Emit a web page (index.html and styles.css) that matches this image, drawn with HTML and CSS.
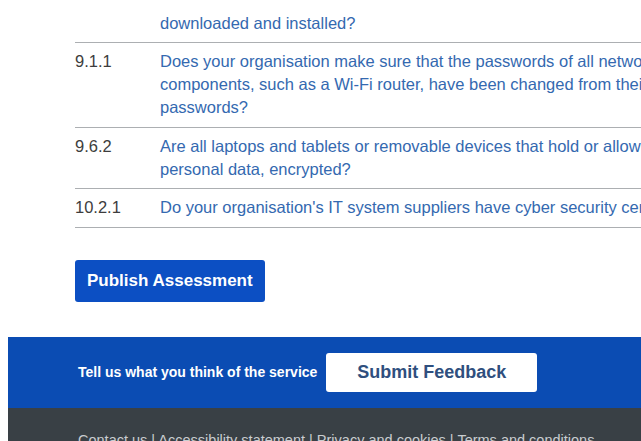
FILE: index.html
```html
<!DOCTYPE html>
<html lang="en">
<head>
<meta charset="utf-8">
<title>Assessment summary</title>
<link rel="stylesheet" href="styles.css">
</head>
<body>
<main class="content">
  <table class="questions">
    <tbody>
      <tr class="row row-continued">
        <td class="ref"></td>
        <td class="question"><a href="#" class="question-link">downloaded and installed?</a></td>
      </tr>
      <tr class="row">
        <td class="ref">9.1.1</td>
        <td class="question"><a href="#" class="question-link">Does your organisation make sure that the passwords of all networked components, such as a Wi-Fi router, have been changed from their default passwords?</a></td>
      </tr>
      <tr class="row">
        <td class="ref">9.6.2</td>
        <td class="question"><a href="#" class="question-link">Are all laptops and tablets or removable devices that hold or allow access to personal data, encrypted?</a></td>
      </tr>
      <tr class="row">
        <td class="ref">10.2.1</td>
        <td class="question"><a href="#" class="question-link">Do your organisation's IT system suppliers have cyber security certification?</a></td>
      </tr>
    </tbody>
  </table>
  <button class="btn-primary" type="button">Publish Assessment</button>
</main>
<footer class="site-footer">
  <div class="feedback">
    <span class="feedback-label">Tell us what you think of the service</span>
    <button class="btn-feedback" type="button">Submit Feedback</button>
  </div>
  <div class="footer-links">
    <a href="#">Contact us</a> | <a href="#">Accessibility statement</a> | <a href="#">Privacy and cookies</a> | <a href="#">Terms and conditions</a>
  </div>
</footer>
</body>
</html>
```

FILE: styles.css
```css
html {
  overflow: hidden;
}

body {
  margin: 8px;
  width: 1000px;
  font-family: "Liberation Sans", Arial, sans-serif;
  background: #ffffff;
  color: #3a3a3a;
}

.content {
  padding: 4px 0 0 67px;
}

/* Question table */
.questions {
  border-collapse: collapse;
  font-size: 16.5px;
  line-height: 23px;
}

.row {
  border-bottom: 1px solid #acafb2;
}

.row td {
  padding: 7px 0 7.5px;
  vertical-align: top;
}

.row-continued td {
  padding-top: 0;
  padding-bottom: 7px;
}

.ref {
  width: 85px;
  color: #3d3d3d;
  padding-left: 1px;
}

.question {
  width: 575px;
}

.question-link {
  color: #3469b0;
  text-decoration: none;
}

/* Primary action */
.btn-primary {
  display: block;
  margin-top: 32px;
  height: 42px;
  padding: 0 12px;
  border: 0;
  border-radius: 3px;
  background: #0c4fc3;
  color: #ffffff;
  font-family: "Liberation Sans", Arial, sans-serif;
  font-size: 17px;
  font-weight: bold;
}

/* Footer */
.site-footer {
  margin-top: 35px;
}

.feedback {
  display: flex;
  align-items: center;
  gap: 9px;
  background: #0b4cb3;
  padding: 16px 0 16px 70px;
}

.feedback-label {
  color: #ffffff;
  font-size: 14px;
  font-weight: bold;
}

.btn-feedback {
  height: 39px;
  width: 211px;
  border: 0;
  border-radius: 3px;
  background: #ffffff;
  color: #2f4f7e;
  font-family: "Liberation Sans", Arial, sans-serif;
  font-size: 18px;
  font-weight: bold;
}

.footer-links {
  background: #394045;
  color: #c9cdd0;
  font-size: 14.5px;
  padding: 24px 0 40px 70px;
}

.footer-links a {
  color: #c9cdd0;
  text-decoration: none;
}
```
